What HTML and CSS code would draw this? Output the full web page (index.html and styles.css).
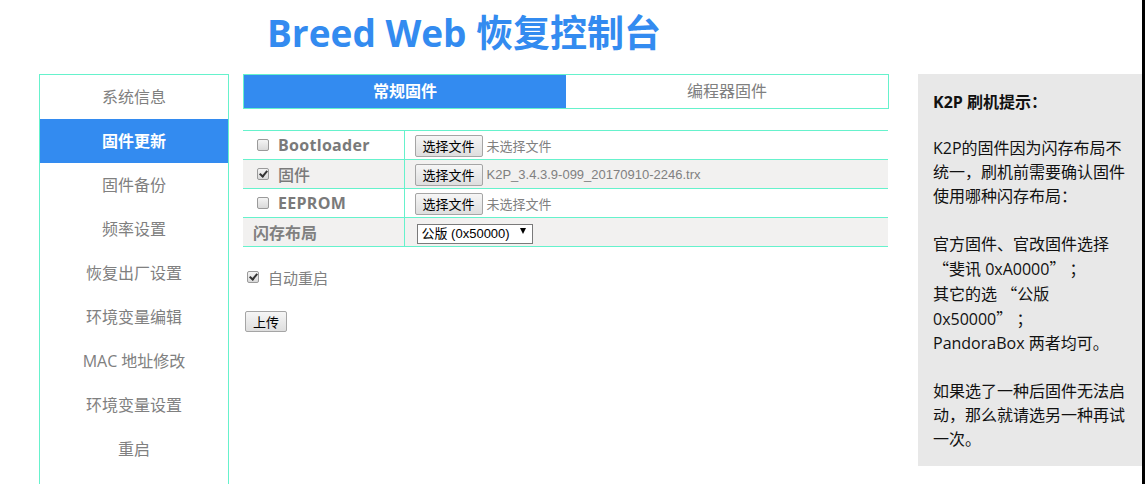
FILE: index.html
```html
<!DOCTYPE html>
<html lang="zh-CN">
<head>
<meta charset="utf-8">
<title>Breed Web 恢复控制台</title>
<link rel="stylesheet" href="styles.css">
</head>
<body>
<div class="page">
  <header class="header">
    <h1 class="title">Breed Web 恢复控制台</h1>
  </header>
  <div class="main">
    <nav class="nav">
      <a class="nav-item">系统信息</a>
      <a class="nav-item active">固件更新</a>
      <a class="nav-item">固件备份</a>
      <a class="nav-item">频率设置</a>
      <a class="nav-item">恢复出厂设置</a>
      <a class="nav-item">环境变量编辑</a>
      <a class="nav-item">MAC 地址修改</a>
      <a class="nav-item">环境变量设置</a>
      <a class="nav-item">重启</a>
    </nav>
    <section class="content">
      <div class="tabs">
        <div class="tab active">常规固件</div>
        <div class="tab">编程器固件</div>
      </div>
      <table class="fw">
        <tr>
          <td class="c1"><label class="lbl"><input type="checkbox" class="cb"><span class="name latin">Bootloader</span></label></td>
          <td class="c2"><button class="btn">选择文件</button><span class="file">未选择文件</span></td>
        </tr>
        <tr class="alt">
          <td class="c1"><label class="lbl"><input type="checkbox" class="cb" checked><span class="name cjk">固件</span></label></td>
          <td class="c2"><button class="btn">选择文件</button><span class="file fname">K2P_3.4.3.9-099_20170910-2246.trx</span></td>
        </tr>
        <tr>
          <td class="c1"><label class="lbl"><input type="checkbox" class="cb"><span class="name latin">EEPROM</span></label></td>
          <td class="c2"><button class="btn">选择文件</button><span class="file">未选择文件</span></td>
        </tr>
        <tr class="alt">
          <td class="c1 head">闪存布局</td>
          <td class="c2 sel-cell"><span class="sel"><select class="select"><option>公版 (0x50000)</option><option>斐讯 (0xA0000)</option></select></span></td>
        </tr>
      </table>
      <label class="auto"><input type="checkbox" class="cb" checked><span>自动重启</span></label>
      <div class="actions"><button class="btn upload">上传</button></div>
    </section>
    <aside class="tips">
      <h2 class="tips-title">K2P 刷机提示：</h2>
      <p class="tips-p">K2P的固件因为闪存布局不统一，刷机前需要确认固件使用哪种闪存布局：</p>
      <p class="tips-p">官方固件、官改固件选择 <span class="q">“</span>斐讯 0xA0000<span class="q">”</span> ；<br>其它的选 <span class="q">“</span>公版 0x50000<span class="q">”</span> ；<br>PandoraBox 两者均可。</p>
      <p class="tips-p">如果选了一种后固件无法启动，那么就请选另一种再试一次。</p>
    </aside>
  </div>
</div>
<div class="edge"></div>
</body>
</html>
```

FILE: styles.css
```css
* { box-sizing: border-box; }
html, body { margin: 0; padding: 0; background: #fff; }
body {
  font-family: "Open Sans", "Noto Sans CJK SC", sans-serif;
  color: #808080;
  overflow: hidden;
}
.page { padding-left: 39px; }
.header { height: 74px; padding-left: 228px; }
.title {
  margin: 0;
  padding-top: 9px;
  font-family: "Open Sans", "Noto Sans CJK SC", sans-serif;
  font-size: 37px;
  line-height: 48px;
  font-weight: 700;
  color: #338bf0;
  letter-spacing: 0;
}
.main { display: flex; align-items: flex-start; }

.nav {
  width: 190px;
  flex: none;
  border: 1px solid #66f2cc;
  padding-bottom: 30px;
  display: flex;
  flex-direction: column;
  margin-right: 14px;
}
.nav-item {
  height: 44px;
  line-height: 44px;
  text-align: center;
  font-size: 16px;
  color: #808080;
}
.nav-item.active { background: #338bf0; color: #fff; font-weight: 700; }

.content { width: 646px; flex: none; margin-right: 29px; }
.tabs {
  display: flex;
  border: 1px solid #66f2cc;
  height: 35px;
}
.tab {
  flex: 1;
  text-align: center;
  line-height: 33px;
  font-size: 16px;
  color: #808080;
}
.tab.active { background: #338bf0; color: #fff; font-weight: 700; }

.fw {
  width: 645px;
  margin-top: 21px;
  border-collapse: collapse;
}
.fw td {
  border-top: 1px solid #66f2cc;
  border-bottom: 1px solid #66f2cc;
  height: 29px;
  padding: 0;
  vertical-align: middle;
}
.fw tr.alt td { background: #f2f1f0; }
.c1 { width: 161px; border-right: 1px solid #66f2cc; padding-left: 14px !important; }
.c1.head { padding-left: 10px !important; font-size: 16px; font-weight: 700; color: #808080; font-family: "Noto Sans CJK SC", sans-serif; }
.c2 { padding-left: 10px !important; }
.lbl { display: flex; align-items: center; }
.cb {
  -webkit-appearance: none;
  appearance: none;
  width: 12px;
  height: 12px;
  margin: 0 9px 0 0;
  border: 1px solid #9a9a9a;
  border-radius: 2px;
  background: linear-gradient(#f4f4f4, #d9d9d9);
  position: relative;
  flex: none;
}
.cb:checked::after {
  content: "";
  position: absolute;
  left: 3px;
  top: 0px;
  width: 3px;
  height: 6px;
  border: solid #333;
  border-width: 0 2px 2px 0;
  transform: rotate(40deg);
}
.name { font-size: 16px; color: #7a7a7a; }
.name.latin { font-weight: 700; letter-spacing: 0.3px; }
.name.cjk { font-family: "Noto Sans CJK SC", sans-serif; font-weight: 500; }
.btn {
  font-family: "Noto Sans CJK SC", sans-serif;
  font-size: 13px;
  color: #000;
  height: 22px;
  padding: 0 7px;
  line-height: 20px;
  border: 1px solid #a5a5a5;
  border-radius: 2px;
  background: linear-gradient(#f6f6f6, #dedede);
  vertical-align: middle;
}
.file {
  margin-left: 4px;
  font-family: "Noto Sans CJK SC", sans-serif;
  font-size: 13px;
  color: #808080;
  vertical-align: middle;
}
.file.fname { font-family: "Liberation Sans", sans-serif; }
.sel-cell { padding-left: 12px !important; }
.sel { position: relative; display: inline-block; vertical-align: middle; }
.select {
  -webkit-appearance: none;
  appearance: none;
  width: 116px;
  height: 20px;
  border: 1px solid #7a7a7a;
  border-radius: 0;
  background: #fff;
  color: #000;
  font-family: "Liberation Sans", "Noto Sans CJK SC", sans-serif;
  font-size: 13px;
  padding: 0 0 0 4px;
  line-height: 18px;
}
.sel::after {
  content: "";
  position: absolute;
  right: 7px;
  top: 7px;
  border-left: 3.5px solid transparent;
  border-right: 3.5px solid transparent;
  border-top: 6px solid #000;
  pointer-events: none;
}

.auto {
  display: flex;
  align-items: center;
  margin-top: 20px;
  padding-left: 4px;
  height: 20px;
  font-family: "Noto Sans CJK SC", sans-serif;
  font-size: 15px;
  color: #808080;
}
.actions { margin-top: 22px; padding-left: 2px; }
.btn.upload { height: 21px; padding: 0 7px; }

.tips {
  width: 224px;
  flex: none;
  background: #e8e8e8;
  padding: 16px 15px 15px 15px;
  color: #111;
  font-family: "Open Sans", "Noto Sans CJK SC", sans-serif;
  font-size: 16px;
  line-height: 24px;
}
.tips-title { margin: 0 0 22px; font-size: 16px; line-height: 24px; font-weight: 700; }
.tips-p { margin: 0 0 24px; }
.tips-p:last-child { margin-bottom: 0; }
.q { font-family: "Noto Sans CJK SC", sans-serif; }

.edge {
  position: fixed;
  top: 0;
  right: 0;
  width: 3px;
  height: 100%;
  background: #000;
}
```
